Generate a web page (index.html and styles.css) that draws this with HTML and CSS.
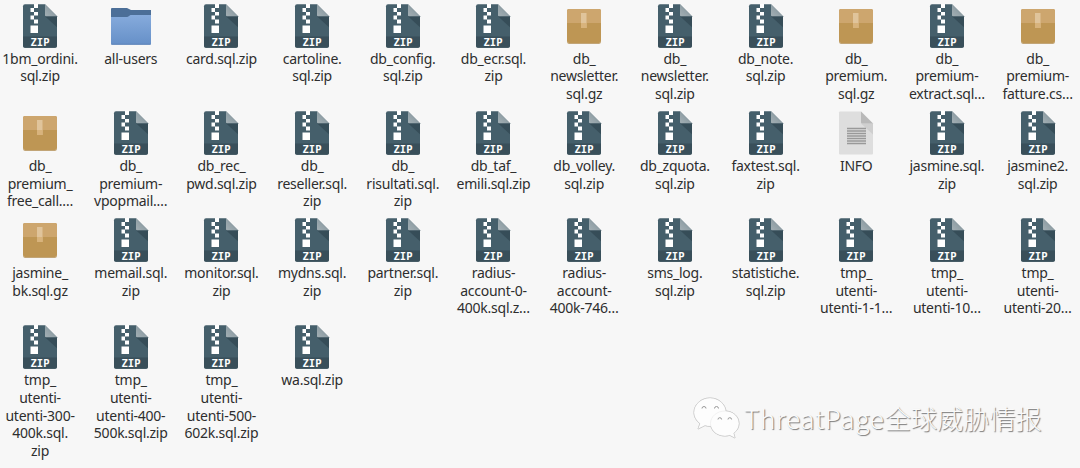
FILE: index.html
```html
<!DOCTYPE html>
<html lang="en">
<head>
<meta charset="utf-8">
<title>Files</title>
<link rel="stylesheet" href="styles.css">
</head>
<body>
<svg class="defs" aria-hidden="true">
  <defs>
    <linearGradient id="blue" x1="0" y1="0" x2="0" y2="1"><stop offset="0" stop-color="#86abdc"/><stop offset="1" stop-color="#6690c8"/></linearGradient>
    <linearGradient id="fold" x1="0" y1="1" x2="1" y2="0"><stop offset="0" stop-color="#a3afb4"/><stop offset="1" stop-color="#7d8f97"/></linearGradient>
  </defs>
  <symbol id="zip" viewBox="0 0 44 48">
    <path fill="#455f6b" d="M7 4.300h20l12 12v29.500q0 2-2 2H7q-2 0-2-2V6.300q0-2 2-2z"/>
    <path fill="#394f5a" d="M5 36.500h34v9.300q0 2-2 2H7q-2 0-2-2z"/>
    <path fill="#364d58" d="M27 16.300h12v11z"/>
    <path fill="url(#fold)" d="M27 4.300l12 12H28q-1 0-1-1z"/>
    <path fill="#fff" d="M16 4h4v4h-4zM12.500 8H16v4h-3.500zM16 12h4v3.500h-4zM12.500 15.500H16v4h-3.500zM16 19.500h4v4h-4zM12.500 25.500H20V33h-7.500z"/>
    <text class="zip-label" x="22" y="45.700" text-anchor="middle" textLength="19" lengthAdjust="spacingAndGlyphs">ZIP</text>
  </symbol>
  <symbol id="gz" viewBox="0 0 44 48">
    <rect x="5" y="9" width="34" height="34" rx="2" fill="#be9654"/>
    <path fill="#cda66e" d="M7 9h30q2 0 2 2v12H5V11q0-2 2-2z"/>
    <path fill="#b18b4d" d="M5 41q0 2 2 2h30q2 0 2-2v.7q0 2-2 2H7q-2 0-2-2z"/>
    <path fill="#e0c49b" d="M19 13h5.500v15H19z"/>
    <path fill="#d8b37c" d="M19 23h5.500v5H19z"/>
  </symbol>
  <symbol id="folder" viewBox="0 0 44 48">
    <path fill="#4c6f98" d="M3 8h15l4 2h20v18H2V9q0-1 1-1z"/>
    <path fill="url(#blue)" d="M2 17h16q1 0 2-1l1.500-1H42v28.500q0 1-1 1H3q-1 0-1-1z"/>
    <path fill="#5c83b8" d="M2 43.700h40q0 1-1 1H3q-1 0-1-1z"/>
  </symbol>
  <symbol id="doc" viewBox="0 0 44 48">
    <path fill="#dedede" d="M6 4.500h21l12 12v30q0 1-1 1H6q-1 0-1-1v-41q0-1 1-1z"/>
    <path fill="#cfcfcf" d="M27 16.500h12v11z"/>
    <path fill="#b9b9b9" d="M27 4.500l12 12H28q-1 0-1-1z"/>
    <path stroke="#999" stroke-width="1.300" d="M13 21.500h19M13 24h19M13 26.500h19M13 29h19M13 31.500h19M13 34h19M13 36.500h19"/>
  </symbol>
</svg>
<main class="files">
<div class="file"><svg class="icon"><use href="#zip"/></svg><p class="name">1bm_ordini.<br>sql.zip</p></div>
<div class="file"><svg class="icon"><use href="#folder"/></svg><p class="name">all-users</p></div>
<div class="file"><svg class="icon"><use href="#zip"/></svg><p class="name">card.sql.zip</p></div>
<div class="file"><svg class="icon"><use href="#zip"/></svg><p class="name">cartoline.<br>sql.zip</p></div>
<div class="file"><svg class="icon"><use href="#zip"/></svg><p class="name">db_config.<br>sql.zip</p></div>
<div class="file"><svg class="icon"><use href="#zip"/></svg><p class="name">db_ecr.sql.<br>zip</p></div>
<div class="file"><svg class="icon"><use href="#gz"/></svg><p class="name">db_<br>newsletter.<br>sql.gz</p></div>
<div class="file"><svg class="icon"><use href="#zip"/></svg><p class="name">db_<br>newsletter.<br>sql.zip</p></div>
<div class="file"><svg class="icon"><use href="#zip"/></svg><p class="name">db_note.<br>sql.zip</p></div>
<div class="file"><svg class="icon"><use href="#gz"/></svg><p class="name">db_<br>premium.<br>sql.gz</p></div>
<div class="file"><svg class="icon"><use href="#zip"/></svg><p class="name">db_<br>premium-<br>extract.sql…</p></div>
<div class="file"><svg class="icon"><use href="#gz"/></svg><p class="name">db_<br>premium-<br>fatture.cs…</p></div>

<div class="file"><svg class="icon"><use href="#gz"/></svg><p class="name">db_<br>premium_<br>free_call.…</p></div>
<div class="file"><svg class="icon"><use href="#zip"/></svg><p class="name">db_<br>premium-<br>vpopmail.…</p></div>
<div class="file"><svg class="icon"><use href="#zip"/></svg><p class="name">db_rec_<br>pwd.sql.zip</p></div>
<div class="file"><svg class="icon"><use href="#zip"/></svg><p class="name">db_<br>reseller.sql.<br>zip</p></div>
<div class="file"><svg class="icon"><use href="#zip"/></svg><p class="name">db_<br>risultati.sql.<br>zip</p></div>
<div class="file"><svg class="icon"><use href="#zip"/></svg><p class="name">db_taf_<br>emili.sql.zip</p></div>
<div class="file"><svg class="icon"><use href="#zip"/></svg><p class="name">db_volley.<br>sql.zip</p></div>
<div class="file"><svg class="icon"><use href="#zip"/></svg><p class="name">db_zquota.<br>sql.zip</p></div>
<div class="file"><svg class="icon"><use href="#zip"/></svg><p class="name">faxtest.sql.<br>zip</p></div>
<div class="file"><svg class="icon"><use href="#doc"/></svg><p class="name">INFO</p></div>
<div class="file"><svg class="icon"><use href="#zip"/></svg><p class="name">jasmine.sql.<br>zip</p></div>
<div class="file"><svg class="icon"><use href="#zip"/></svg><p class="name">jasmine2.<br>sql.zip</p></div>

<div class="file"><svg class="icon"><use href="#gz"/></svg><p class="name">jasmine_<br>bk.sql.gz</p></div>
<div class="file"><svg class="icon"><use href="#zip"/></svg><p class="name">memail.sql.<br>zip</p></div>
<div class="file"><svg class="icon"><use href="#zip"/></svg><p class="name">monitor.sql.<br>zip</p></div>
<div class="file"><svg class="icon"><use href="#zip"/></svg><p class="name">mydns.sql.<br>zip</p></div>
<div class="file"><svg class="icon"><use href="#zip"/></svg><p class="name">partner.sql.<br>zip</p></div>
<div class="file"><svg class="icon"><use href="#zip"/></svg><p class="name">radius-<br>account-0-<br>400k.sql.z…</p></div>
<div class="file"><svg class="icon"><use href="#zip"/></svg><p class="name">radius-<br>account-<br>400k-746…</p></div>
<div class="file"><svg class="icon"><use href="#zip"/></svg><p class="name">sms_log.<br>sql.zip</p></div>
<div class="file"><svg class="icon"><use href="#zip"/></svg><p class="name">statistiche.<br>sql.zip</p></div>
<div class="file"><svg class="icon"><use href="#zip"/></svg><p class="name">tmp_<br>utenti-<br>utenti-1-1…</p></div>
<div class="file"><svg class="icon"><use href="#zip"/></svg><p class="name">tmp_<br>utenti-<br>utenti-10…</p></div>
<div class="file"><svg class="icon"><use href="#zip"/></svg><p class="name">tmp_<br>utenti-<br>utenti-20…</p></div>

<div class="file"><svg class="icon"><use href="#zip"/></svg><p class="name">tmp_<br>utenti-<br>utenti-300-<br>400k.sql.<br>zip</p></div>
<div class="file"><svg class="icon"><use href="#zip"/></svg><p class="name">tmp_<br>utenti-<br>utenti-400-<br>500k.sql.zip</p></div>
<div class="file"><svg class="icon"><use href="#zip"/></svg><p class="name">tmp_<br>utenti-<br>utenti-500-<br>602k.sql.zip</p></div>
<div class="file"><svg class="icon"><use href="#zip"/></svg><p class="name">wa.sql.zip</p></div>
</main>
<div class="watermark">
  <svg class="wechat" viewBox="0 0 48 44">
    <path d="M17 2C8 2 1 8.500 1 16.500c0 4.500 2.500 8.500 6 11L5 33l7-3.500c1.500.5 3.300.8 5 .8 9 0 16-6.300 16-14S26 2 17 2z"/>
    <path d="M32 15c-8 0-14.500 5.500-14.500 12.500S24 40 32 40c1.700 0 3.300-.3 4.800-.7L42 42l-1.300-4.800c3.300-2.300 5.300-5.800 5.300-9.700C46 20.500 40 15 32 15z"/>
    <g class="eyes"><path d="M9 12.500a2 2 0 0 1 4 0M21.500 12.500a2 2 0 0 1 4 0M25 23.500a1.800 1.800 0 0 1 3.600 0M35 23.500a1.800 1.800 0 0 1 3.600 0"/></g>
  </svg>
  <span class="brand"><span class="latin">ThreatPage</span>全球威胁情报</span>
</div>
</body>
</html>
```

FILE: styles.css
```css
body {
  position: relative;
  width: 1080px;
  height: 468px;
  margin: 0;
  overflow: hidden;
  background: #f7f7f7;
  color: #2e2e2e;
  font-family: "Noto Sans", "Open Sans", sans-serif;
}

.defs {
  position: absolute;
  width: 44px;
  height: 48px;
}

.files {
  display: grid;
  grid-template-columns: repeat(12, 90.7px);
  grid-auto-rows: 107.1px;
  margin-left: -5.3px;
}

.file {
  display: flex;
  flex-direction: column;
  align-items: center;
}

.icon {
  flex: none;
  width: 44px;
  height: 48px;
}

.zip-label {
  fill: #fff;
  font: bold 10.5px "DejaVu Sans Mono", monospace;
}

.name {
  margin: 1.7px 0 0;
  font-size: 14px;
  letter-spacing: -0.25px;
  line-height: 17.8px;
  text-align: center;
  white-space: nowrap;
}

.watermark {
  position: absolute;
  left: 693px;
  top: 396px;
  display: flex;
  align-items: center;
}

.wechat {
  width: 48px;
  height: 44px;
  fill: #fdfdfd;
  stroke: #e4e4e4;
  stroke-width: 0.5;
  filter: drop-shadow(0.5px 0.8px 0.5px #777);
}

.eyes {
  fill: none;
  stroke: #999;
  stroke-width: 1;
}

.brand {
  margin-left: 3px;
  color: #fafafa;
  font-family: "Noto Sans CJK SC", sans-serif;
  font-size: 26.2px;
  font-weight: 300;
  line-height: 36px;
  white-space: nowrap;
  text-shadow: 1px 1px 1px #777;
}

.latin {
  letter-spacing: 0.7px;
}
```
